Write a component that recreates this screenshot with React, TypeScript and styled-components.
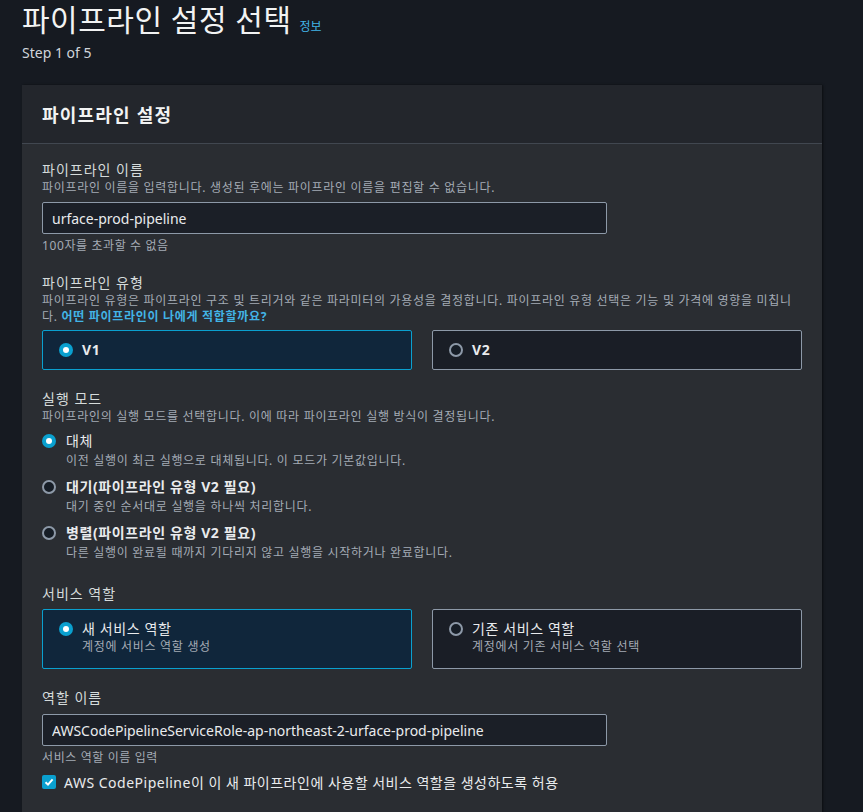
import React, { useState } from 'react';
import styled, { createGlobalStyle } from 'styled-components';

const GlobalStyle = createGlobalStyle`
  body {
    margin: 0;
    background: #161a21;
    font-family: "Noto Sans", "Noto Sans CJK KR", sans-serif;
    color: #d1d5db;
  }
`;

const Page = styled.div`
  padding: 0 41px 0 22px;
  min-height: 812px;
`;

const TitleRow = styled.div`
  display: flex;
  align-items: baseline;
  gap: 8px;
`;

const Title = styled.h1`
  margin: 0;
  font-size: 30px;
  font-weight: 400;
  color: #f2f3f3;
  line-height: 40px;
  letter-spacing: 0.5px;
`;

const InfoLink = styled.a`
  font-size: 12px;
  color: #42b4e6;
  text-decoration: none;
`;

const Step = styled.div`
  font-size: 14px;
  color: #d1d5db;
  margin-top: 3px;
  line-height: 20px;
`;

const Panel = styled.section`
  margin-top: 22px;
  width: 800px;
  background: #2a2d32;
  box-shadow: 1px 0 2px rgba(0, 0, 0, 0.5);
`;

const PanelHeader = styled.div`
  background: #23262c;
  border-bottom: 1px solid #414750;
  height: 58px;
  padding: 0 20px;
  display: flex;
  align-items: center;
`;

const PanelTitle = styled.h2`
  margin: 0;
  font-size: 18px;
  font-weight: 700;
  letter-spacing: 1.2px;
  color: #f2f3f3;
`;

const PanelBody = styled.div`
  padding: 16px 20px 30px;
  display: flex;
  flex-direction: column;
  gap: 19px;
`;

const Field = styled.div`
  display: flex;
  flex-direction: column;
`;

const Label = styled.div`
  font-size: 14px;
  line-height: 20px;
  letter-spacing: 1px;
  color: #d5dbdb;
`;

const Desc = styled.div<{ $gap?: boolean }>`
  font-size: 12px;
  line-height: 16px;
  letter-spacing: 0.7px;
  color: #a4abb5;
  margin-top: ${({ $gap }) => ($gap ? '2px' : '0')};
`;

const BoldLink = styled.a`
  color: #42b4e6;
  font-weight: 700;
  text-decoration: none;
`;

const Input = styled.input`
  box-sizing: border-box;
  width: 565px;
  height: 32px;
  margin-top: 6px;
  padding: 0 9px;
  background: #1b1f27;
  border: 1px solid #8d99a8;
  border-radius: 2px;
  color: #e9ebed;
  font-family: inherit;
  font-size: 14px;
  outline: none;
`;

const Hint = styled.div`
  font-size: 12px;
  line-height: 16px;
  letter-spacing: 0.6px;
  color: #a4abb5;
  margin-top: 4px;
`;

const TileGrid = styled.div`
  display: grid;
  grid-template-columns: 370px 370px;
  gap: 20px;
  margin-top: 5px;
`;

const Tile = styled.div<{ $selected?: boolean; $tall?: boolean }>`
  box-sizing: border-box;
  height: ${({ $tall }) => ($tall ? '60px' : '40px')};
  background: ${({ $selected }) => ($selected ? '#10263b' : '#1a1e26')};
  border: 1px solid ${({ $selected }) => ($selected ? '#0aa0cf' : '#8d99a8')};
  border-radius: 2px;
  padding: ${({ $tall }) => ($tall ? '9px 16px' : '0 16px')};
  display: flex;
  align-items: ${({ $tall }) => ($tall ? 'flex-start' : 'center')};
  gap: 9px;
  cursor: pointer;
`;

const Radio = styled.span<{ $checked?: boolean; $offset?: number }>`
  box-sizing: border-box;
  flex: none;
  width: 14px;
  height: 14px;
  border-radius: 50%;
  margin-top: ${({ $offset }) => `${$offset ?? 0}px`};
  background: ${({ $checked }) => ($checked ? '#0aa0cf' : '#161d26')};
  border: ${({ $checked }) => ($checked ? 'none' : '2px solid #8d99a8')};
  display: flex;
  align-items: center;
  justify-content: center;

  &::after {
    content: '';
    display: ${({ $checked }) => ($checked ? 'block' : 'none')};
    width: 6px;
    height: 6px;
    border-radius: 50%;
    background: #fff;
  }
`;

const TileText = styled.div`
  display: flex;
  flex-direction: column;
`;

const TileTitle = styled.div<{ $bold?: boolean }>`
  font-size: 14px;
  line-height: 20px;
  letter-spacing: 0.6px;
  font-weight: ${({ $bold }) => ($bold ? 700 : 400)};
  color: #e9ebed;
`;

const OptionList = styled.div`
  display: flex;
  flex-direction: column;
  gap: 8px;
  margin: 6px 0 4px;
`;

const Option = styled.div`
  display: flex;
  gap: 10px;
  cursor: pointer;
`;

const OptionTitle = styled.div<{ $bold?: boolean }>`
  font-size: 14px;
  line-height: 20px;
  letter-spacing: 0.6px;
  font-weight: ${({ $bold }) => ($bold ? 700 : 400)};
  color: #e9ebed;
`;

const CheckRow = styled.label`
  display: flex;
  align-items: center;
  gap: 8px;
  margin-top: 6px;
  font-size: 14px;
  letter-spacing: 0.5px;
  color: #e9ebed;
`;

const Checkbox = styled.span`
  flex: none;
  width: 14px;
  height: 14px;
  border-radius: 2px;
  background: #0aa0cf;
  display: flex;
  align-items: center;
  justify-content: center;
`;

const modes = [
  { id: 'superseded', title: '대체', desc: '이전 실행이 최근 실행으로 대체됩니다. 이 모드가 기본값입니다.', bold: false },
  { id: 'queued', title: '대기(파이프라인 유형 V2 필요)', desc: '대기 중인 순서대로 실행을 하나씩 처리합니다.', bold: true },
  { id: 'parallel', title: '병렬(파이프라인 유형 V2 필요)', desc: '다른 실행이 완료될 때까지 기다리지 않고 실행을 시작하거나 완료합니다.', bold: true },
];

export default function App() {
  const [type, setType] = useState('V1');
  const [mode, setMode] = useState('superseded');
  const [role, setRole] = useState('new');
  const [name, setName] = useState('urface-prod-pipeline');
  const [roleName, setRoleName] = useState('AWSCodePipelineServiceRole-ap-northeast-2-urface-prod-pipeline');

  return (
    <>
      <GlobalStyle />
      <Page>
        <TitleRow>
          <Title>파이프라인 설정 선택</Title>
          <InfoLink href="#">정보</InfoLink>
        </TitleRow>
        <Step>Step 1 of 5</Step>

        <Panel>
          <PanelHeader>
            <PanelTitle>파이프라인 설정</PanelTitle>
          </PanelHeader>
          <PanelBody>
            <Field>
              <Label>파이프라인 이름</Label>
              <Desc>파이프라인 이름을 입력합니다. 생성된 후에는 파이프라인 이름을 편집할 수 없습니다.</Desc>
              <Input value={name} onChange={(e) => setName(e.target.value)} />
              <Hint>100자를 초과할 수 없음</Hint>
            </Field>

            <Field>
              <Label>파이프라인 유형</Label>
              <Desc>
                파이프라인 유형은 파이프라인 구조 및 트리거와 같은 파라미터의 가용성을 결정합니다. 파이프라인 유형 선택은 기능 및 가격에 영향을 미칩니다.{' '}
                <BoldLink href="#">어떤 파이프라인이 나에게 적합할까요?</BoldLink>
              </Desc>
              <TileGrid>
                {['V1', 'V2'].map((v) => (
                  <Tile key={v} $selected={type === v} onClick={() => setType(v)}>
                    <Radio $checked={type === v} />
                    <TileTitle $bold>{v}</TileTitle>
                  </Tile>
                ))}
              </TileGrid>
            </Field>

            <Field>
              <Label>실행 모드</Label>
              <Desc>파이프라인의 실행 모드를 선택합니다. 이에 따라 파이프라인 실행 방식이 결정됩니다.</Desc>
              <OptionList>
                {modes.map((m) => (
                  <Option key={m.id} onClick={() => setMode(m.id)}>
                    <Radio $checked={mode === m.id} $offset={3} />
                    <div>
                      <OptionTitle $bold={m.bold}>{m.title}</OptionTitle>
                      <Desc $gap>{m.desc}</Desc>
                    </div>
                  </Option>
                ))}
              </OptionList>
            </Field>

            <Field>
              <Label>서비스 역할</Label>
              <TileGrid>
                <Tile $tall $selected={role === 'new'} onClick={() => setRole('new')}>
                  <Radio $checked={role === 'new'} $offset={3} />
                  <TileText>
                    <TileTitle>새 서비스 역할</TileTitle>
                    <Desc>계정에 서비스 역할 생성</Desc>
                  </TileText>
                </Tile>
                <Tile $tall $selected={role === 'existing'} onClick={() => setRole('existing')}>
                  <Radio $checked={role === 'existing'} $offset={3} />
                  <TileText>
                    <TileTitle>기존 서비스 역할</TileTitle>
                    <Desc>계정에서 기존 서비스 역할 선택</Desc>
                  </TileText>
                </Tile>
              </TileGrid>
            </Field>

            <Field>
              <Label>역할 이름</Label>
              <Input value={roleName} onChange={(e) => setRoleName(e.target.value)} />
              <Hint>서비스 역할 이름 입력</Hint>
              <CheckRow>
                <Checkbox>
                  <svg width="10" height="10" viewBox="0 0 10 10">
                    <path d="M1.5 5.2 L4 7.6 L8.6 2.4" stroke="#fff" strokeWidth="2" fill="none" />
                  </svg>
                </Checkbox>
                AWS CodePipeline이 이 새 파이프라인에 사용할 서비스 역할을 생성하도록 허용
              </CheckRow>
            </Field>
          </PanelBody>
        </Panel>
      </Page>
    </>
  );
}
